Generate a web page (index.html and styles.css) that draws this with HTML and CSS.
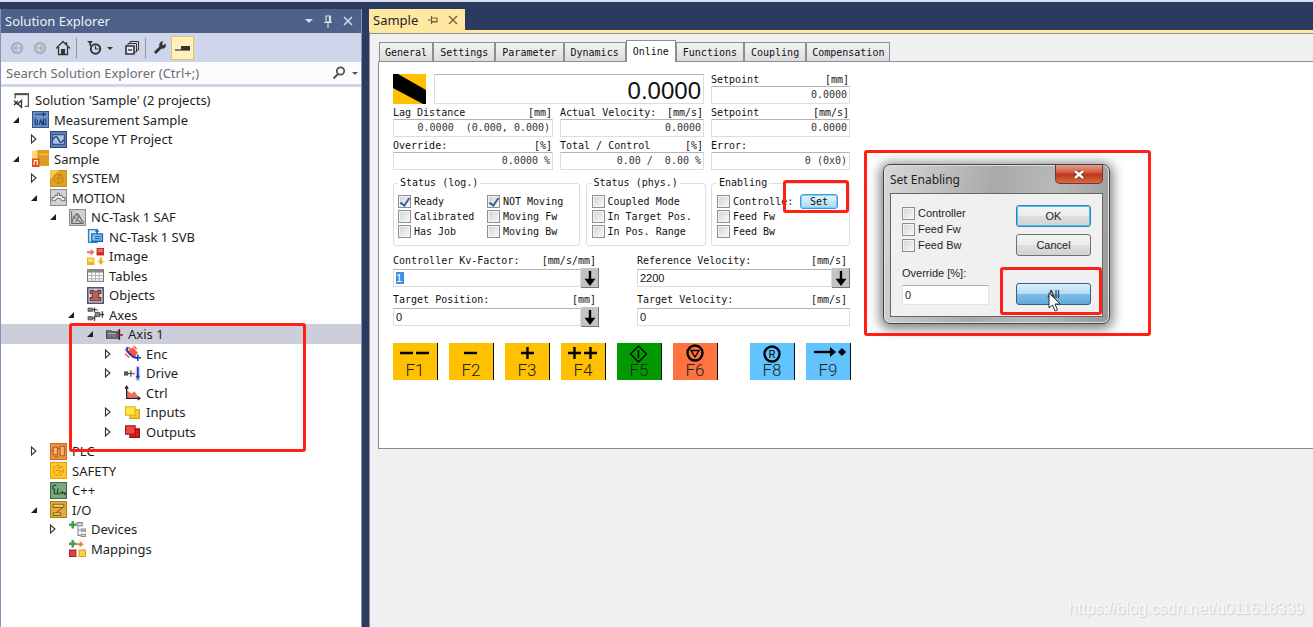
FILE: index.html
```html
<!DOCTYPE html>
<html lang="en">
  <head>
    <meta charset="UTF-8" />
    <meta name="viewport" content="width=device-width, initial-scale=1.0" />
    <title>Sample</title>
    <link rel="stylesheet" href="styles.css">
  </head>
  <body>
    <svg class="defs">
      <symbol id="open" viewBox="0 0 8 8"><path d="M7 1v6H1z" fill="#1e1e1e" /></symbol>
      <symbol id="closed" viewBox="0 0 8 10"><path d="M1.5 1v8L6 5z" fill="#fff" stroke="#333" stroke-width="1.1" /></symbol>
      <symbol id="down" viewBox="0 0 18 20"><path d="M9 3v12M6 12l3 4 3-4z" fill="#000" stroke="#000" stroke-width="2.4" /></symbol>
    </svg>

    <main class="workspace">
      <aside class="explorer">
        <header class="explorer-title">
          <h1>Solution Explorer</h1>
          <button title="Menu"><svg width="8" height="5" viewBox="0 0 8 5"><path d="M0 0h8L4 4z" fill="#d6dcec" /></svg></button>
          <button title="Pin"><svg width="10" height="13" viewBox="0 0 10 13"><path d="M3 1h4.5v6H3zM1 7.5h8M5 8v5M6.5 1v6" fill="none" stroke="#d6dcec" stroke-width="1.2" /></svg></button>
          <button title="Close"><svg width="10" height="10" viewBox="0 0 10 10"><path d="M1 1l8 8M9 1L1 9" stroke="#d6dcec" stroke-width="1.5" /></svg></button>
        </header>

        <div class="toolbar">
          <button title="Back"><svg width="14" height="14" viewBox="0 0 14 14"><circle cx="7" cy="7" r="5" fill="none" stroke="#aeb2c0" stroke-width="2.6" /><path d="M10.500 7H4.500M7 4.500L4.500 7 7 9.500" fill="none" stroke="#aeb2c0" stroke-width="1.6" /></svg></button>
          <button title="Forward"><svg width="14" height="14" viewBox="0 0 14 14"><circle cx="7" cy="7" r="5" fill="none" stroke="#aeb2c0" stroke-width="2.6" /><path d="M3.500 7h6M7 4.500L9.500 7 7 9.500" fill="none" stroke="#aeb2c0" stroke-width="1.6" /></svg></button>
          <button title="Home"><svg width="16" height="16" viewBox="0 0 16 16"><path d="M1 8.500L8 1.500l7 7M3.500 7v7.500h9V7M11.500 5V2" fill="none" stroke="#333" stroke-width="1.3" /><path d="M6 9h4v5H6z" fill="#333" /></svg></button>
          <span class="separator"></span>
          <button class="wide" title="Pending changes"><svg width="26" height="16" viewBox="0 0 26 16"><path d="M0 1h6L4 3.500V6H2.500V3.500z" fill="#333" /><circle cx="8.500" cy="9" r="4.700" fill="none" stroke="#333" stroke-width="2" /><path d="M8.500 6v3h3" fill="none" stroke="#333" stroke-width="1.2" /><path d="M20 7h6l-3 3z" fill="#333" /></svg></button>
          <button title="Collapse all"><svg width="16" height="16" viewBox="0 0 16 16"><path d="M6 3.500V1.500h8.500V10h-2M4 5.500v-2h8.500V12h-2" fill="none" stroke="#333" /><path d="M2 6h8v8H2z" fill="#e6e9f5" stroke="#333" stroke-width="1.6" /><path d="M4 10h4" stroke="#333" stroke-width="1.4" /></svg></button>
          <span class="separator"></span>
          <button title="Properties"><svg width="14" height="14" viewBox="0 0 14 14"><path d="M2 12l6-6" stroke="#333" stroke-width="3" /><path d="M12.500 2.500L10 4.500 9 3l1.500-2.500C7 0 5.500 3 6.500 5.500L8.500 7.500c3 .8 5.500-2 4-5z" fill="#333" /></svg></button>
          <button class="active" title="Preview"><svg width="16" height="8" viewBox="0 0 16 8"><path d="M0 6h15" stroke="#333" stroke-width="1.2" /><path d="M6 2h9v4H6z" fill="#333" /></svg></button>
        </div>

        <div class="search">
          <input type="text" aria-label="Search Solution Explorer" placeholder="Search Solution Explorer (Ctrl+;)" />
          <svg width="26" height="14" viewBox="0 0 26 14"><circle cx="8.500" cy="5" r="3.700" fill="none" stroke="#555" stroke-width="1.8" /><path d="M6 8l-4.500 4.500" stroke="#555" stroke-width="2.2" /><path d="M20 6h6l-3 3z" fill="#555" /></svg>
        </div>

        <ul class="tree">
          <li class="level-0">
            <svg class="icon" viewBox="0 0 16 16"><path d="M2 6V2h12.500v11.500H11" fill="none" stroke="#555" stroke-width="1.2" /><path d="M1.500 2h13.500" stroke="#555" stroke-width="2" /><path d="M1 8l3.500 4M1 12.500L4.500 8.500M8 8v6.500L4.500 11z" fill="none" stroke="#333" stroke-width="1.2" /></svg>
            <span>Solution 'Sample' (2 projects)</span>
          </li>
          <li class="level-1">
            <svg class="arrow"><use href="#open" /></svg>
            <svg class="icon" viewBox="0 0 16 16"><rect x=".5" y=".5" width="15" height="15" fill="#6f94cc" stroke="#35568c" /><path d="M3 3h9M10 1.500L12.500 3 10 4.500M3 6v7h2V8M7 13l1-5 1.500 5 1.500-6v6h2V7" fill="none" stroke="#1d3768" /></svg>
            <span>Measurement Sample</span>
          </li>
          <li class="level-2">
            <svg class="arrow"><use href="#closed" /></svg>
            <svg class="icon" viewBox="0 0 16 16"><rect x=".5" y=".5" width="15" height="15" fill="#5f83bd" stroke="#2c4a7e" /><rect x="2.500" y="3.500" width="11" height="9" fill="#a9c4ea" stroke="#2c4a7e" /><path d="M3 8c2-4 4-3 5 0s3 4 5 0" fill="none" stroke="#1d3768" stroke-width="1.2" /></svg>
            <span>Scope YT Project</span>
          </li>
          <li class="level-1">
            <svg class="arrow"><use href="#open" /></svg>
            <svg class="icon" viewBox="0 0 16 16"><path d="M0 1l5-1v16H0z" fill="#ffd982" /><path d="M5 0h11v15H5z" fill="#dc9d23" /><path d="M7 4h8" stroke="#f4c965" /><path d="M0 8h7v8H0z" fill="#e94e1b" /><path d="M2 10v4M2 10h3v4" stroke="#fff" fill="none" /></svg>
            <span>Sample</span>
          </li>
          <li class="level-2">
            <svg class="arrow"><use href="#closed" /></svg>
            <svg class="icon" viewBox="0 0 16 16"><rect x=".5" y=".5" width="15" height="15" fill="#e2a21e" stroke="#c99224" /><path d="M0 0h9L0 9z" fill="#f3c65b" /><circle cx="8" cy="8" r="4.500" fill="none" stroke="#c4861a" /><path d="M8 3v10M5 8h6M8 5l3 1" stroke="#c4861a" /></svg>
            <span>SYSTEM</span>
          </li>
          <li class="level-2">
            <svg class="arrow"><use href="#open" /></svg>
            <svg class="icon" viewBox="0 0 16 16"><rect x=".5" y=".5" width="15" height="15" fill="#d4d4d4" stroke="#8d8d8d" /><path d="M2 11V8h2l1-2h2V4h2v2h2l1 2h2v3h-3c-1-3-5-3-6 0z" fill="#ececec" stroke="#777" /></svg>
            <span>MOTION</span>
          </li>
          <li class="level-3">
            <svg class="arrow"><use href="#open" /></svg>
            <svg class="icon" viewBox="0 0 16 16"><rect x=".5" y=".5" width="15" height="15" fill="#d2d2d2" stroke="#8d8d8d" /><path d="M2.500 2v11.500H14M3 12c3-9 5-9 7-5s3 5 4 5M4 7l8 6M7 5l2 3-3 4" fill="none" stroke="#666" /></svg>
            <span>NC-Task 1 SAF</span>
          </li>
          <li class="level-4">
            <svg class="icon" viewBox="0 0 16 16"><path d="M1.500 1.500h8v12h-8z" fill="#d9ecfb" stroke="#287fc2" stroke-width="1.3" /><path d="M4.500 5.500h10v7h-10z" fill="#91c8f2" stroke="#186aae" stroke-width="1.3" /><path d="M7 8h6M7 10h6M9.500 1v5M7.500 3h4" fill="none" stroke="#186aae" /></svg>
            <span>NC-Task 1 SVB</span>
          </li>
          <li class="level-4">
            <svg class="icon" viewBox="0 0 16 16"><path d="M3.500 1L7 4 3.500 7V5H0V3h3.500z" fill="#ee6a50" /><path d="M9 0h7v7H9z" fill="#c92a28" /><path d="M10 1h5v3h-5z" fill="#e96b5c" /><path d="M0 9h7v7H0z" fill="#e7b81c" /><path d="M1 10h5v3H1z" fill="#ffe16b" /><path d="M12 9h2v3h2l-3 4-3-4h2z" fill="#f2ac21" /></svg>
            <span>Image</span>
          </li>
          <li class="level-4">
            <svg class="icon" viewBox="0 0 16 16"><rect x=".5" y="2.500" width="15" height="11" fill="#fff" stroke="#777" /><path d="M1 4h14" stroke="#888" stroke-width="2.5" /><path d="M1 8h14M1 11h14M4.500 5v8M8 5v8M11.500 5v8" stroke="#b0b0b0" /></svg>
            <span>Tables</span>
          </li>
          <li class="level-4">
            <svg class="icon" viewBox="0 0 16 16"><rect x=".7" y=".7" width="14.600" height="14.600" fill="#cfd5e3" stroke="#4c566b" stroke-width="1.4" /><path d="M3 3h3v1h4V3h3v3h-2v4h2v3H3v-3h2V6H3z" fill="#b9655c" stroke="#74302a" /></svg>
            <span>Objects</span>
          </li>
          <li class="level-4">
            <svg class="arrow"><use href="#open" /></svg>
            <svg class="icon" viewBox="0 0 16 16"><path d="M1 2h4v3H1zM1 10h4v3H1zM8 6h4v4H8z" fill="#888" stroke="#444" stroke-width=".8" /><path d="M5 3.500h4M7 1.500V6M5 11.500h3M7 9v5M12 8h4M14.500 5v6" stroke="#444" stroke-width="1.2" /><path d="M9 3.500h1" stroke="#e33" stroke-width="1.5" /></svg>
            <span>Axes</span>
          </li>
          <li class="level-5 selected">
            <svg class="arrow"><use href="#open" /></svg>
            <svg class="icon" viewBox="0 0 16 16"><path d="M.5 4.500h4l1 1H11v6H.5z" fill="#777" stroke="#444" /><path d="M2 7h7" stroke="#aaa" /><path d="M12.500 3v10" stroke="#222" stroke-width="1.6" /><path d="M13 8.500h3" stroke="#e02b20" stroke-width="2" /></svg>
            <span>Axis 1</span>
          </li>
          <li class="level-6">
            <svg class="arrow"><use href="#closed" /></svg>
            <svg class="icon" viewBox="0 0 16 16"><path d="M1 4l3 3M4 2l4 4M9 1l3 3M1 8l4 4" stroke="#ef6b52" stroke-width="1.5" /><path d="M8 2l5 5-4 6-6-6z" fill="#ee5a45" /><path d="M3 2C2 6 6 11 12 12" fill="none" stroke="#3535b5" stroke-width="1.7" /><path d="M13 9v6M10 12h6" stroke="#1c2fae" stroke-width="1.4" /></svg>
            <span>Enc</span>
          </li>
          <li class="level-6">
            <svg class="arrow"><use href="#closed" /></svg>
            <svg class="icon" viewBox="0 0 16 16"><path d="M0 6h4v4H0z" fill="#555" /><path d="M4 8h4M6.500 5v6" stroke="#333" /><path d="M8 8h2" stroke="#e33" stroke-width="1.5" /><path d="M11 1h4v14h-4z" fill="#c9cee4" /><path d="M13 2v9" stroke="#2038c8" stroke-width="1.6" /><path d="M11 10h4l-2 4z" fill="#2038c8" /></svg>
            <span>Drive</span>
          </li>
          <li class="level-6">
            <svg class="icon" viewBox="0 0 16 16"><path d="M3 13V6l4 3 3-2 4 6z" fill="#f36a58" /><path d="M2.500 14V3M1 4.500L2.500 2 4 4.500M2 13.500h12M13 12l2 1.500-2 1.500" fill="none" stroke="#222" stroke-width="1.2" /></svg>
            <span>Ctrl</span>
          </li>
          <li class="level-6">
            <svg class="arrow"><use href="#closed" /></svg>
            <svg class="icon" viewBox="0 0 16 16"><path d="M5.500 5.500h9v8h-9z" fill="#f5cf22" stroke="#cda511" /><path d="M1.500 2.500h9v8h-9z" fill="#ffe646" stroke="#d8b21b" /></svg>
            <span>Inputs</span>
          </li>
          <li class="level-6">
            <svg class="arrow"><use href="#closed" /></svg>
            <svg class="icon" viewBox="0 0 16 16"><path d="M5.500 5.500h9v8h-9z" fill="#d91d1d" stroke="#8e0e0e" /><path d="M1.500 2.500h9v8h-9z" fill="#ed4a42" stroke="#9d1414" /></svg>
            <span>Outputs</span>
          </li>
          <li class="level-2">
            <svg class="arrow"><use href="#closed" /></svg>
            <svg class="icon" viewBox="0 0 16 16"><rect x=".5" y=".5" width="15" height="15" fill="#ef9245" stroke="#c46c28" /><path d="M3 4h4v7H3zM9.500 3h4v9h-4zM1 7h2M7 5h2M4 13h4" fill="#f9b77b" stroke="#b35a18" /></svg>
            <span>PLC</span>
          </li>
          <li class="level-2">
            <svg class="icon" viewBox="0 0 16 16"><rect x=".5" y=".5" width="15" height="15" fill="#ffc727" stroke="#e0a40f" /><circle cx="8" cy="8" r="4.800" fill="none" stroke="#d6960f" stroke-dasharray="3 1" /><path d="M5 8h4M7 6l4-1M8 11l3-3" stroke="#d6960f" /></svg>
            <span>SAFETY</span>
          </li>
          <li class="level-2">
            <svg class="icon" viewBox="0 0 16 16"><rect x=".5" y=".5" width="15" height="15" fill="#7fa882" stroke="#3c6b45" /><path d="M6 3C2 2 1 7 5 7M4 7v4h3M8 6c-2 3-1 6 2 5M10 10h3M11.500 8.500v3M13 11h2M14 9.500v3" fill="none" stroke="#174d24" stroke-width="1.1" /></svg>
            <span>C++</span>
          </li>
          <li class="level-2">
            <svg class="arrow"><use href="#open" /></svg>
            <svg class="icon" viewBox="0 0 16 16"><rect x=".5" y=".5" width="15" height="15" fill="#e5ad3c" stroke="#b27e17" /><path d="M3 3h10v3H3zM3 11h7v2.500H3zM12 6l-6 5" fill="#f5d286" stroke="#8f6414" /></svg>
            <span>I/O</span>
          </li>
          <li class="level-3">
            <svg class="arrow"><use href="#closed" /></svg>
            <svg class="icon" viewBox="0 0 16 16"><path d="M3.500 0v7M0 3.500h7" stroke="#4b9a58" stroke-width="2.4" /><path d="M7.500 1.500h5v3h-5zM11.500 7.500h4v2h-4zM11.500 12.500h4v2h-4z" fill="#ddd" stroke="#888" /><path d="M8.500 5v8.500H11M8.500 8.500H11" fill="none" stroke="#888" /></svg>
            <span>Devices</span>
          </li>
          <li class="level-3">
            <svg class="icon" viewBox="0 0 16 16"><path d="M3.500 0v7M0 3.500h7" stroke="#4b9a58" stroke-width="2.4" /><path d="M7 3h3V1l4 3-4 3V5H7z" fill="#ef8037" /><path d="M.5 9.500h6v6h-6z" fill="#e0443c" stroke="#a82320" /><path d="M9.500 9.500h6v6h-6z" fill="#ffd04a" stroke="#d9a021" /></svg>
            <span>Mappings</span>
          </li>
        </ul>
      </aside>

      <section class="editor">
        <div class="document-tab">
          <span>Sample</span>
          <button title="Pin"><svg width="10" height="8" viewBox="0 0 10 8"><path d="M0 4h3M3.500 0v8M4 2h5v4H4M4 5.500h5" fill="none" stroke="#75643a" stroke-width="1.2" /></svg></button>
          <button title="Close"><svg width="10" height="10" viewBox="0 0 10 10"><path d="M1 1l8 8M9 1L1 9" stroke="#75643a" stroke-width="1.4" /></svg></button>
        </div>

        <div class="document">
          <nav class="tabs">
            <button>General</button>
            <button>Settings</button>
            <button>Parameter</button>
            <button>Dynamics</button>
            <button class="current">Online</button>
            <button>Functions</button>
            <button>Coupling</button>
            <button>Compensation</button>
          </nav>

          <div class="page">
            <form class="online">
              <div class="readouts">
                <div class="position">
                  <svg width="33" height="30" viewBox="0 0 33 30"><path d="M0 0h33v30H0z" fill="#ffc000" /><path d="M0 0h5l28 16v14h-3L0 14z" fill="#000" /></svg>
                  <output>0.0000</output>
                </div>
                <div class="readout">
                  <div class="caption"><span>Setpoint</span><span>[mm]</span></div>
                  <output>0.0000</output>
                </div>
                <div class="readout">
                  <div class="caption"><span>Lag Distance</span><span>[mm]</span></div>
                  <output>0.0000  (0.000, 0.000)</output>
                </div>
                <div class="readout">
                  <div class="caption"><span>Actual Velocity:</span><span>[mm/s]</span></div>
                  <output>0.0000</output>
                </div>
                <div class="readout">
                  <div class="caption"><span>Setpoint</span><span>[mm/s]</span></div>
                  <output>0.0000</output>
                </div>
                <div class="readout">
                  <div class="caption"><span>Override:</span><span>[%]</span></div>
                  <output>0.0000 %</output>
                </div>
                <div class="readout">
                  <div class="caption"><span>Total / Control</span><span>[%]</span></div>
                  <output>0.00 /  0.00 %</output>
                </div>
                <div class="readout">
                  <div class="caption"><span>Error:</span></div>
                  <output>0 (0x0)</output>
                </div>
              </div>

              <div class="groups">
                <fieldset class="two-columns">
                  <legend>Status (log.)</legend>
                  <label><input type="checkbox" checked />Ready</label>
                  <label><input type="checkbox" checked />NOT Moving</label>
                  <label><input type="checkbox" />Calibrated</label>
                  <label><input type="checkbox" />Moving Fw</label>
                  <label><input type="checkbox" />Has Job</label>
                  <label><input type="checkbox" />Moving Bw</label>
                </fieldset>
                <fieldset>
                  <legend>Status (phys.)</legend>
                  <label><input type="checkbox" />Coupled Mode</label>
                  <label><input type="checkbox" />In Target Pos.</label>
                  <label><input type="checkbox" />In Pos. Range</label>
                </fieldset>
                <fieldset>
                  <legend>Enabling</legend>
                  <label><input type="checkbox" />Controlle:</label>
                  <label><input type="checkbox" />Feed Fw</label>
                  <label><input type="checkbox" />Feed Bw</label>
                  <button type="button" class="set">Set</button>
                </fieldset>
              </div>

              <div class="values">
                <div class="value">
                  <label class="caption" for="kv"><span>Controller Kv-Factor:</span><span>[mm/s/mm]</span></label>
                  <div class="entry">
                    <input type="text" id="kv" class="selected-text" value="1" />
                    <button type="button" title="Download"><svg width="18" height="20"><use href="#down" /></svg></button>
                  </div>
                </div>
                <div class="value">
                  <label class="caption" for="reference"><span>Reference Velocity:</span><span>[mm/s]</span></label>
                  <div class="entry">
                    <input type="text" id="reference" value="2200" />
                    <button type="button" title="Download"><svg width="18" height="20"><use href="#down" /></svg></button>
                  </div>
                </div>
                <div class="value">
                  <label class="caption" for="target"><span>Target Position:</span><span>[mm]</span></label>
                  <div class="entry">
                    <input type="text" id="target" value="0" />
                    <button type="button" title="Download"><svg width="18" height="20"><use href="#down" /></svg></button>
                  </div>
                </div>
                <div class="value">
                  <label class="caption" for="velocity"><span>Target Velocity:</span><span>[mm/s]</span></label>
                  <div class="entry">
                    <input type="text" id="velocity" value="0" />
                  </div>
                </div>
              </div>

              <div class="keys">
                <button type="button"><svg viewBox="0 0 44 18"><path d="M7 10h13M23 10h13" /></svg>F1</button>
                <button type="button"><svg viewBox="0 0 44 18"><path d="M15 10h13" /></svg>F2</button>
                <button type="button"><svg viewBox="0 0 44 18"><path d="M16 10h13M22.500 4v12" /></svg>F3</button>
                <button type="button"><svg viewBox="0 0 44 18"><path d="M7 10h13M13.500 4v12M23 10h13M29.500 4v12" /></svg>F4</button>
                <button type="button" class="start"><svg viewBox="0 0 44 18"><path class="thin" d="M21.500 3l8 8-8 8-8-8zM21.500 7v8" /></svg>F5</button>
                <button type="button" class="stop"><svg viewBox="0 0 44 18"><circle cx="22" cy="10" r="7.500" /><path class="thin" d="M18 7.500h8L22 14z" /></svg>F6</button>
                <button type="button" class="reset"><svg viewBox="0 0 44 18"><circle cx="22" cy="11" r="7.500" /><text x="22" y="15">R</text></svg>F8</button>
                <button type="button" class="home"><svg viewBox="0 0 44 18"><path d="M8 9h18" /><path class="solid" d="M24 4l6 5-6 5zM36 5l4 4-4 4-4-4z" /></svg>F9</button>
              </div>
            </form>
          </div>
        </div>
      </section>
    </main>

    <div class="dialog" role="dialog" aria-labelledby="dialog-title">
      <header>
        <h2 id="dialog-title">Set Enabling</h2>
        <button class="close" title="Close"><svg width="12" height="9" viewBox="0 0 12 9"><path d="M2 1l8 7M10 1L2 8" stroke="#5a3030" stroke-width="4" /><path d="M2 1l8 7M10 1L2 8" stroke="#fff" stroke-width="2.4" /></svg></button>
      </header>
      <form class="dialog-body">
        <div class="dialog-options">
          <label><input type="checkbox" />Controller</label>
          <label><input type="checkbox" />Feed Fw</label>
          <label><input type="checkbox" />Feed Bw</label>
          <label class="override" for="override">Override [%]:</label>
          <input type="text" id="override" value="0" />
        </div>
        <div class="dialog-buttons">
          <button type="button" class="default">OK</button>
          <button type="button">Cancel</button>
          <button type="button" class="all">All</button>
        </div>
      </form>
    </div>

    <div class="mark mark-axis"></div>
    <div class="mark mark-set"></div>
    <div class="mark mark-dialog"></div>
    <div class="mark mark-all"></div>
    <svg class="cursor" width="13" height="20" viewBox="0 0 13 20"><path d="M1 1v15l3.500-3 2.500 6 2.500-1-2.500-6H12z" fill="#fff" stroke="#333" /></svg>
    <p class="watermark">https://blog.csdn.net/u011618339</p>
  </body>
</html>
```
FILE: styles.css
```css
* {
  margin: 0;
  padding: 0;
  box-sizing: border-box;
}

body {
  position: relative;
  min-height: 100vh;
  background: #2b3b60;
  font-family: "Noto Sans", sans-serif;
  font-size: 13px;
  color: #1e1e1e;
  overflow: hidden;
}

button {
  border: none;
  background: none;
  font: inherit;
  color: inherit;
}

input,
output {
  font: inherit;
  color: inherit;
}

.defs {
  position: absolute;
  width: 0;
  height: 0;
}

.workspace {
  display: flex;
  gap: 7px;
  min-height: 100vh;
  padding-top: 7px;
  border-top: 2px solid #d5dcf0;
}

/* Solution explorer */
.explorer {
  display: flex;
  flex-direction: column;
  flex: 0 0 362px;
  background: #fff;
  border: solid #8593b8;
  border-width: 0 1px;
}

.explorer-title {
  display: flex;
  align-items: center;
  gap: 10px;
  height: 24px;
  padding: 0 8px 0 4px;
  background: #4d6189;
  color: #f0f2f8;
}

.explorer-title h1 {
  flex: 1;
  font-size: 13px;
  font-weight: normal;
}

.explorer-title button,
.toolbar button,
.document-tab button {
  display: flex;
  align-items: center;
  justify-content: center;
}

.toolbar {
  display: flex;
  align-items: center;
  height: 29px;
  padding-left: 4px;
  background: #d0d6ea;
}

.toolbar button {
  width: 23px;
  height: 24px;
}

.toolbar .wide {
  width: 41px;
}

.toolbar .active {
  background: #fff0bd;
  border: 1px solid #e5c365;
}

.separator {
  width: 1px;
  height: 20px;
  margin: 0 2px;
  background: #8b92a8;
}

.search {
  display: flex;
  align-items: center;
  height: 25px;
  padding-right: 3px;
  background: #fcfcff;
  border-bottom: 3px solid #d0d6ea;
}

.search input {
  flex: 1;
  padding-left: 5px;
  border: none;
  background: none;
  outline: none;
}

.search input::placeholder {
  color: #6d6d6d;
}

.tree {
  padding-top: 3px;
  list-style: none;
}

.tree li {
  display: flex;
  align-items: center;
  height: 20px;
  white-space: nowrap;
}

.tree li:nth-child(even) {
  height: 19px;
}

.tree .selected {
  background: #cccedb;
}

.icon {
  width: 17px;
  height: 17px;
  margin-right: 5px;
}

.arrow {
  width: 8px;
  height: 10px;
  margin: 0 12px 0 -20px;
}

.level-0 {
  padding-left: 12px;
}

.level-1 {
  padding-left: 31px;
}

.level-2 {
  padding-left: 49px;
}

.level-3 {
  padding-left: 68px;
}

.level-4 {
  padding-left: 86px;
}

.level-5 {
  padding-left: 105px;
}

.level-6 {
  padding-left: 123px;
}

/* Editor */
.editor {
  display: flex;
  flex-direction: column;
  flex: 1;
  min-width: 0;
}

.document-tab {
  display: flex;
  align-items: center;
  align-self: flex-start;
  gap: 10px;
  height: 21px;
  padding: 0 7px 0 4px;
  background: #ffe8a2;
}

.document {
  flex: 1;
  padding: 7px 0 0 8px;
  background: #f0eff1;
  border-top: 3px solid #ffe8a2;
  border-left: 1px solid #8e8e96;
  box-shadow: inset 0 1px #8e8e96;
  font-family: "DejaVu Sans Mono", monospace;
  font-size: 10px;
}

.tabs {
  display: flex;
  align-items: flex-end;
  height: 21px;
  padding-left: 1px;
}

.tabs button {
  height: 19px;
  padding: 0 6px;
  background: linear-gradient(#f4f4f4, #dcdcdc);
  border: 1px solid #8c8e94;
  border-bottom: none;
  color: #111;
}

.tabs button:first-child,
.tabs button:last-child {
  padding: 0 5px;
}

.tabs .current {
  position: relative;
  height: 22px;
  margin-bottom: -1px;
  background: #fff;
}

.page {
  padding: 12px 0 68px 14px;
  background: #fff;
  border: 1px solid #8c8e94;
  border-right: none;
}

.online {
  width: 457px;
  color: #111;
}

.readouts {
  display: grid;
  grid-template-columns: 160px 144px 139px;
  gap: 3px 7px;
}

.position {
  display: flex;
  grid-column: span 2;
  gap: 8px;
}

.caption {
  display: flex;
  justify-content: space-between;
  padding-right: 1px;
  line-height: 12px;
}

.readout output,
.position output {
  display: block;
  height: 18px;
  padding-right: 2px;
  border: 1px solid #dcdcdc;
  border-top-color: #b4b4b4;
  border-radius: 1px;
  line-height: 16px;
  text-align: right;
  white-space: pre;
}

.readout output {
  color: #333;
}

.position output {
  flex: 1;
  height: 30px;
  font-family: "Liberation Sans", sans-serif;
  font-size: 24px;
  line-height: 32px;
}

.groups {
  display: grid;
  grid-template-columns: 187px 120px 139px;
  justify-content: space-between;
  margin-top: 7px;
}

fieldset {
  position: relative;
  min-width: 0;
  padding: 5px 5px 6px;
  border: 1px solid #d5dfe5;
  border-radius: 3px;
}

legend {
  padding: 0 2px;
  line-height: 12px;
}

fieldset label,
.dialog-options label {
  display: flex;
  align-items: center;
  gap: 3px;
  height: 15px;
  white-space: nowrap;
}

.two-columns {
  display: grid;
  grid-template-columns: 89px 1fr;
  padding-left: 4px;
}

input[type="checkbox"] {
  position: relative;
  appearance: none;
  flex: none;
  width: 13px;
  height: 13px;
  background: linear-gradient(135deg, #cfd2d6, #fafafa);
  border: 1px solid #8e8f8f;
  box-shadow: inset 0 0 0 1px #f4f4f4;
}

input[type="checkbox"]:checked::after {
  content: "";
  position: absolute;
  left: 3px;
  top: 0;
  width: 4px;
  height: 8px;
  border: solid #3c5ba8;
  border-width: 0 2px 2px 0;
  transform: rotate(35deg);
}

/* Sits over the end of the Controller label */
.set {
  position: absolute;
  top: 5px;
  right: 11px;
  width: 38px;
  height: 15px;
  background: linear-gradient(#eaf6fd, #a7d9f5);
  border: 1px solid #3c9edb;
  border-radius: 3px;
  box-shadow: inset 0 0 0 1px #7fd0f8;
  line-height: 12px;
}

.values {
  display: grid;
  grid-template-columns: 206px 213px;
  justify-content: space-between;
  row-gap: 5px;
  margin-top: 8px;
}

.values .caption {
  padding-right: 3px;
  line-height: 14px;
}

.entry {
  display: flex;
  align-items: center;
  height: 20px;
  font-family: "Liberation Sans", sans-serif;
  font-size: 11px;
}

.entry input {
  flex: 1;
  min-width: 0;
  height: 18px;
  padding-left: 2px;
  border: 1px solid #dcdcdc;
  border-top-color: #b4b4b4;
}

.entry .selected-text {
  color: #fff;
  background: linear-gradient(#3d8fe0, #3d8fe0) 2px 2px / 8px 12px no-repeat #fff;
}

.entry button {
  width: 18px;
  height: 20px;
  background: #c3c3c3;
  border: solid #777;
  border-width: 0 1px 1px 0;
}

.entry svg {
  display: block;
}

.keys {
  display: flex;
  gap: 11px;
  margin-top: 16px;
}

.keys button {
  display: flex;
  flex-direction: column;
  align-items: center;
  width: 45px;
  height: 37px;
  background: #ffc000;
  border-right: 1px solid #111;
  font-family: Roboto, "Liberation Sans", sans-serif;
  font-size: 17px;
  font-weight: 300;
  line-height: 19px;
  color: #222;
}

.keys svg {
  flex: none;
  width: 44px;
  height: 18px;
  overflow: visible;
  fill: none;
  stroke: #000;
  stroke-width: 2.4px;
}

.keys .thin {
  stroke-width: 1.4px;
}

.keys .solid {
  fill: #000;
  stroke: none;
}

.keys text {
  fill: #000;
  stroke: none;
  font-size: 11px;
  font-weight: normal;
  text-anchor: middle;
}

.keys .start {
  background: #009a00;
}

.keys .stop {
  background: #ff7340;
}

.keys .reset,
.keys .home {
  background: #62c4ff;
}

.keys .reset {
  margin-left: 21px;
}

/* Set Enabling window */
.dialog {
  position: absolute;
  left: 883px;
  top: 164px;
  width: 227px;
  padding: 0 6px 6px;
  background: linear-gradient(100deg, #d8d8d8, #a9a9a9 45%, #b9b9b9 70%, #989898);
  border: 1px solid #444;
  border-radius: 7px;
  box-shadow: inset 0 0 0 1px #e0e0e0, 0 2px 12px 3px rgba(0, 0, 0, 0.5);
}

.dialog header {
  display: flex;
  align-items: center;
  height: 28px;
}

.dialog h2 {
  flex: 1;
  font-size: 12px;
  font-weight: normal;
}

.close {
  display: flex;
  align-items: center;
  justify-content: center;
  align-self: flex-start;
  width: 48px;
  height: 19px;
  background: linear-gradient(#e5a08d, #cf5438 45%, #b93517 50%, #dc6a45);
  border: 1px solid #6b3a33;
  border-top: none;
  border-radius: 0 0 5px 5px;
}

.dialog-body {
  display: flex;
  justify-content: space-between;
  padding: 11px;
  background: #f0f0f0;
  border: 1px solid #666;
  font-family: "Liberation Sans", sans-serif;
  font-size: 11px;
}

.dialog-options {
  width: 87px;
}

.dialog-options label {
  height: 16px;
}

.dialog-options .override {
  margin: 12px 0 4px;
}

.dialog-options input[type="text"] {
  display: block;
  width: 100%;
  height: 20px;
  padding-left: 2px;
  border: 1px solid #e2e3ea;
  border-top-color: #abadb3;
}

.dialog-buttons {
  display: flex;
  flex-direction: column;
  gap: 7px;
  width: 75px;
}

.dialog-buttons button {
  height: 22px;
  background: linear-gradient(#f4f4f4, #ececec 48%, #dedede 52%, #d2d2d2);
  border: 1px solid #707070;
  border-radius: 3px;
}

.dialog-buttons .default {
  border-color: #3c7fb1;
  box-shadow: inset 0 0 0 1px #49c2f5;
}

.dialog-buttons .all {
  margin-top: 20px;
  background: linear-gradient(#dbeefa, #b5dcf3 48%, #7dbde5 52%, #5fa9dc);
  border-color: #2c628b;
}

/* Red highlight boxes */
.mark {
  position: absolute;
  border: 3px solid #ff2013;
  border-radius: 3px;
  pointer-events: none;
}

.mark-axis {
  left: 69px;
  top: 323px;
  width: 237px;
  height: 129px;
}

.mark-set {
  left: 783px;
  top: 180px;
  width: 66px;
  height: 33px;
}

.mark-dialog {
  left: 864px;
  top: 150px;
  width: 287px;
  height: 186px;
}

.mark-all {
  left: 1000px;
  top: 267px;
  width: 102px;
  height: 48px;
}

.cursor {
  position: absolute;
  left: 1048px;
  top: 292px;
}

.watermark {
  position: absolute;
  right: 9px;
  bottom: 9px;
  font-family: "Liberation Sans", sans-serif;
  font-size: 16px;
  color: #f8f8fa;
  text-shadow: 1px 1px 1px #ccc;
}
```
